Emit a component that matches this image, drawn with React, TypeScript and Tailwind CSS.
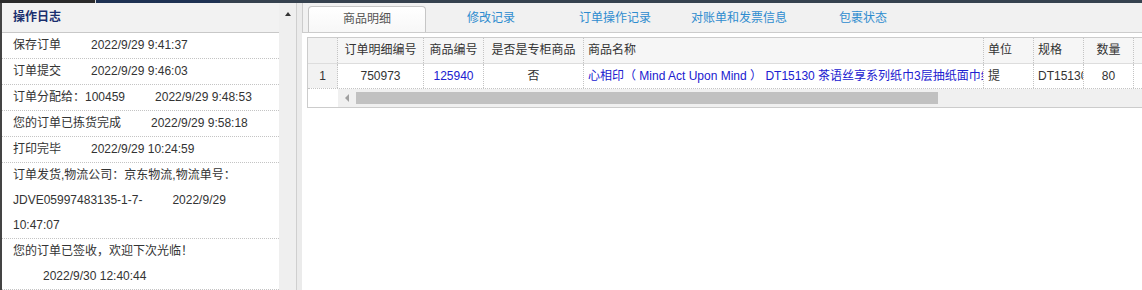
import React from 'react';

interface LogItem {
    label: string;
    time: string;
}

const logs: LogItem[] = [
    { label: '保存订单', time: '2022/9/29 9:41:37' },
    { label: '订单提交', time: '2022/9/29 9:46:03' },
    { label: '订单分配给：100459', time: '2022/9/29 9:48:53' },
    { label: '您的订单已拣货完成', time: '2022/9/29 9:58:18' },
    { label: '打印完毕', time: '2022/9/29 10:24:59' },
    { label: '订单发货,物流公司：京东物流,物流单号：JDVE05997483135-1-7-', time: '2022/9/29 10:47:07' },
    { label: '您的订单已签收，欢迎下次光临！', time: '2022/9/30 12:40:44' },
];

const tabs = ['商品明细', '修改记录', '订单操作记录', '对账单和发票信息', '包裹状态'];

const App: React.FC = () => {
    return (
        <div className="w-[1142px] h-[290px] overflow-hidden bg-white text-[12px] text-[#333] font-['Liberation_Sans','Noto_Sans_CJK_SC',sans-serif]">
            {/* top strip */}
            <div className="flex h-[3px]">
                <div className="w-[95px] bg-[#2b2b2b]" />
                <div className="w-px bg-[#d8d8d8]" />
                <div className="w-[124px] bg-[#1e3253]" />
                <div className="flex-1 bg-[#36424f]" />
            </div>

            <div className="flex h-[287px]">
                {/* Log panel */}
                <div className="w-[279px] shrink-0 border-l-2 border-[#444] flex flex-col overflow-hidden bg-white">
                    <div className="h-[30px] shrink-0 bg-[#f2f2f2] border-b border-[#c8c8c8] pl-[11px] leading-[29px] font-bold text-[#1a2f6e]">
                        操作日志
                    </div>
                    {logs.map((log, i) => (
                        <div key={i} className="shrink-0 pl-[11px] pr-[10px] leading-[25px] border-b border-dotted border-[#c4c4c4]">
                            {log.label}
                            <span className="ml-[30px]">{log.time}</span>
                        </div>
                    ))}
                </div>

                {/* vertical scrollbar */}
                <div className="w-[17px] shrink-0 bg-[#efefef]">
                    <div className="ml-[6px] mt-[9px] w-0 h-0 border-x-[3px] border-x-transparent border-b-[4px] border-b-[#333]" />
                </div>
                <div className="w-px shrink-0 bg-[#cfcfcf]" />
                <div className="w-[5px] shrink-0 bg-[#ebebeb]" />

                {/* Detail panel */}
                <div className="flex-1 min-w-0 flex flex-col bg-white overflow-hidden">
                    <div className="h-[30px] shrink-0 bg-[#f1f1f1] border-l border-b border-[#cccccc] pl-[5px] flex items-end gap-[6px]">
                        {tabs.map((t, i) =>
                            i === 0 ? (
                                <div key={t} className="w-[118px] h-[26px] shrink-0 rounded-t-[4px] border border-b-0 border-[#c6c6c6] bg-linear-to-b from-white to-[#f7f7f7] text-center leading-[24px] text-[#555]">
                                    {t}
                                </div>
                            ) : (
                                <div key={t} className="w-[118px] h-[26px] shrink-0 text-center leading-[24px] text-[#2e8ccf]">
                                    {t}
                                </div>
                            )
                        )}
                    </div>

                    <div className="pl-[5px] pt-[4px]">
                        <div className="w-[900px] border border-[#cccccc] bg-white">
                            {/* header */}
                            <div className="flex h-[26px] border-b border-[#dddddd] bg-[#f6f6f6] leading-[25px]">
                                <div className="w-[30px] shrink-0 bg-[#f2f2f2] border-r border-dotted border-[#c4c4c4]" />
                                <div className="w-[86px] shrink-0 text-center border-r border-dotted border-[#c4c4c4]">订单明细编号</div>
                                <div className="w-[60px] shrink-0 text-center border-r border-dotted border-[#c4c4c4]">商品编号</div>
                                <div className="w-[100px] shrink-0 text-center border-r border-dotted border-[#c4c4c4]">是否是专柜商品</div>
                                <div className="w-[400px] shrink-0 pl-[4px] border-r border-dotted border-[#c4c4c4]">商品名称</div>
                                <div className="w-[50px] shrink-0 pl-[4px] border-r border-dotted border-[#c4c4c4]">单位</div>
                                <div className="w-[50px] shrink-0 pl-[4px] border-r border-dotted border-[#c4c4c4]">规格</div>
                                <div className="w-[50px] shrink-0 text-center border-r border-dotted border-[#c4c4c4]">数量</div>
                                <div className="flex-1" />
                            </div>
                            {/* row */}
                            <div className="flex h-[25px] border-b border-dotted border-[#c4c4c4] leading-[24px] whitespace-nowrap">
                                <div className="w-[30px] shrink-0 bg-[#f2f2f2] text-center border-r border-dotted border-[#c4c4c4]">1</div>
                                <div className="w-[86px] shrink-0 text-center border-r border-dotted border-[#c4c4c4]">750973</div>
                                <div className="w-[60px] shrink-0 text-center text-[#2020d0] border-r border-dotted border-[#c4c4c4]">125940</div>
                                <div className="w-[100px] shrink-0 text-center border-r border-dotted border-[#c4c4c4]">否</div>
                                <div className="w-[400px] shrink-0 pl-[4px] overflow-hidden text-[#2020d0] border-r border-dotted border-[#c4c4c4]">
                                    心相印（ Mind Act Upon Mind ） DT15130 茶语丝享系列纸巾3层抽纸面巾纸 120抽
                                </div>
                                <div className="w-[50px] shrink-0 pl-[4px] overflow-hidden border-r border-dotted border-[#c4c4c4]">提</div>
                                <div className="w-[50px] shrink-0 pl-[4px] overflow-hidden border-r border-dotted border-[#c4c4c4]">DT15130</div>
                                <div className="w-[50px] shrink-0 text-center border-r border-dotted border-[#c4c4c4]">80</div>
                                <div className="flex-1" />
                            </div>
                            {/* horizontal scrollbar */}
                            <div className="flex h-[18px]">
                                <div className="w-[30px] shrink-0 bg-white" />
                                <div className="flex-1 bg-[#f0f0f0] flex items-center">
                                    <div className="ml-[7px] w-0 h-0 border-y-[4px] border-y-transparent border-r-[4px] border-r-[#a0a0a0]" />
                                    <div className="ml-[7px] w-[582px] h-[12px] bg-[#c1c1c1]" />
                                </div>
                            </div>
                        </div>
                    </div>
                </div>
            </div>
        </div>
    );
};

export default App;
